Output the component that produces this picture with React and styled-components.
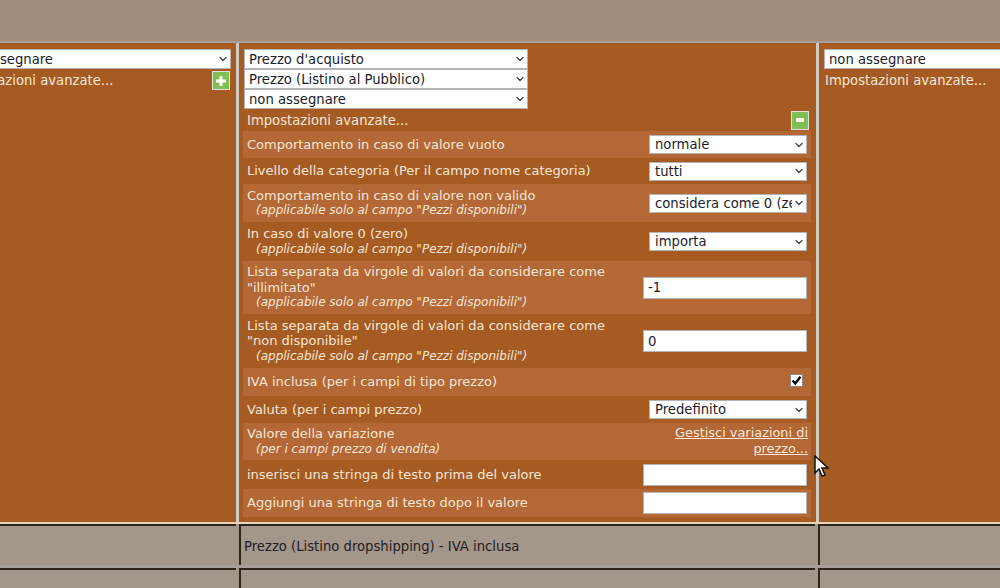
import styled, { createGlobalStyle } from "styled-components"
import { ChevronDown } from "lucide-react"

const GlobalStyle = createGlobalStyle`
  html, body {
    margin: 0;
    height: 100%;
    overflow: hidden;
    background: #a79f98;
  }
  * { box-sizing: border-box; }
`

const Page = styled.div`
  position: relative;
  width: 1000px;
  height: 588px;
  overflow: hidden;
  font-family: "DejaVu Sans", Verdana, sans-serif;
  font-size: 13px;
  color: #f6e6d8;
`

const TopBand = styled.div`
  height: 41px;
  background: #a28c7b;
`

const MainRow = styled.div`
  display: grid;
  grid-template-columns: 236px 577px 1fr;
  column-gap: 3px;
  margin-top: 2px;
  height: 479px;
  background: #cfcac5;
`

const Column = styled.div`
  background: #a65b22;
  padding: 6px ${(p) => p.$right || 0}px 0 ${(p) => p.$left || 0}px;
  min-width: 0;
  overflow: hidden;
`

const SideColumn = styled(Column)`
  display: flex;
  flex-direction: column;
  align-items: ${(p) => (p.$end ? "flex-end" : "flex-start")};
`

const SelectWrap = styled.div`
  position: relative;
  flex: none;
  width: ${(p) => p.$w}px;
  height: ${(p) => p.$h || 20}px;
`

const NativeSelect = styled.select`
  appearance: none;
  display: block;
  width: 100%;
  height: 100%;
  margin: 0;
  padding: 0 14px 0 ${(p) => p.$pad || 4}px;
  border: 1px solid #b4b4b8;
  border-radius: 0;
  background: #fff;
  color: #1c1c28;
  font: 13.2px "DejaVu Sans", Verdana, sans-serif;
`

const Arrow = styled.span`
  position: absolute;
  right: 2px;
  top: 50%;
  transform: translateY(-50%);
  display: flex;
  color: #444;
  pointer-events: none;
`

const Dropdown = ({ value, w, h, pad }) => (
  <SelectWrap $w={w} $h={h}>
    <NativeSelect $pad={pad} defaultValue={value}>
      <option>{value}</option>
    </NativeSelect>
    <Arrow>
      <ChevronDown size={12} strokeWidth={2.6} />
    </Arrow>
  </SelectWrap>
)

const AdvancedHead = styled.div`
  display: flex;
  flex: none;
  align-items: center;
  justify-content: space-between;
  width: ${(p) => p.$w};
  height: ${(p) => p.$h}px;
  padding: ${(p) => p.$pad};
  font-size: 13.2px;
  white-space: nowrap;
`

const ToggleButton = styled.span`
  flex: none;
  display: flex;
  align-items: center;
  justify-content: center;
  width: 18px;
  height: 19px;
  background: #7fbf56;
  border: 1px solid #e3e3d8;
`

const MiddleStack = styled.div`
  display: flex;
  flex-direction: column;
  padding-left: 1px;
`

const Settings = styled.div`
  display: flex;
  flex-direction: column;
  width: 568px;
`

const Row = styled.div`
  display: grid;
  grid-template-columns: 1fr 165px;
  align-items: center;
  height: ${(p) => p.$h}px;
  padding: 0 4px;
  background: ${(p) => (p.$light ? "#b36835" : "transparent")};
  line-height: 15.5px;
`

const RowLabel = styled.div`
  min-width: 0;
  padding-right: 10px;
`

const Hint = styled.div`
  margin-left: 9px;
  font-size: 12px;
  font-style: italic;
`

const RowControl = styled.div`
  display: flex;
  justify-content: flex-end;
`

const TextInput = styled.input`
  display: block;
  width: 164px;
  height: 22px;
  margin: 0;
  padding: 0 4px;
  border: 1px solid #b4b4b8;
  background: #fff;
  color: #1c1c28;
  font: 13.2px "DejaVu Sans", Verdana, sans-serif;
`

const CheckBox = styled.span`
  display: flex;
  align-items: center;
  justify-content: center;
  width: 13px;
  height: 13px;
  margin: 0 4px 3px 0;
  background: #fff;
  border: 1px solid #8a8a8a;
`

const ManageLink = styled.a`
  display: block;
  margin-right: -1px;
  color: #f9e9dc;
  font-size: 12.9px;
  text-align: right;
  text-decoration: underline;
  line-height: 16px;
  padding-bottom: 1px;
`

const BottomRule = styled.div`
  height: 2px;
  background: #e9d3bf;
`

const GrayRow = styled.div`
  display: grid;
  grid-template-columns: 236px 576px 1fr;
  column-gap: 3px;
  height: ${(p) => p.$h}px;
  margin-top: ${(p) => p.$gap || 0}px;
  background: #a3968b;
`

const GrayCell = styled.div`
  display: flex;
  align-items: center;
  padding: 2px 0 0 3px;
  font-size: 13.2px;
  color: #23201d;
  border-top: 2px solid #2d241c;
  border-left: ${(p) => (p.$noLine ? "0" : "2px solid #2d241c")};
`

const Pointer = styled.svg`
  position: absolute;
  left: 814px;
  top: 455px;
`

const rows = [
  { h: 27, light: true, label: "Comportamento in caso di valore vuoto", select: "normale" },
  { h: 26, label: "Livello della categoria (Per il campo nome categoria)", select: "tutti" },
  { h: 38, light: true, label: "Comportamento in caso di valore non valido", hint: "Pezzi disponibili", select: "considera come 0 (zero)" },
  { h: 39, label: "In caso di valore 0 (zero)", hint: "Pezzi disponibili", select: "importa" },
  { h: 53, light: true, label: 'Lista separata da virgole di valori da considerare come "illimitato"', hint: "Pezzi disponibili", input: "-1" },
  { h: 54, label: 'Lista separata da virgole di valori da considerare come "non disponibile"', hint: "Pezzi disponibili", input: "0" },
]

const SettingRow = ({ h, light, label, hint, select, input }) => (
  <Row $h={h} $light={light}>
    <RowLabel>
      {label}
      {hint && <Hint>(applicabile solo al campo "{hint}")</Hint>}
    </RowLabel>
    <RowControl>
      {select && <Dropdown value={select} w={158} h={19} pad={5} />}
      {input && <TextInput defaultValue={input} />}
    </RowControl>
  </Row>
)

export default function App() {
  return (
    <Page>
      <GlobalStyle />
      <TopBand />
      <MainRow>
        <SideColumn $end $right={5}>
          <Dropdown value="non assegnare" w={281} pad={5} />
          <AdvancedHead $w="281px" $h={23} $pad="0 1px 0 2px">
            <span>Impostazioni avanzate...</span>
            <ToggleButton>
              <svg width="12" height="12" viewBox="0 0 12 12"><path d="M6 1v10M1 6h10" stroke="#fff" strokeWidth="3" /></svg>
            </ToggleButton>
          </AdvancedHead>
        </SideColumn>
        <Column $left={4}>
          <MiddleStack>
            <Dropdown value="Prezzo d'acquisto" w={284} />
            <Dropdown value="Prezzo (Listino al Pubblico)" w={284} />
            <Dropdown value="non assegnare" w={284} />
            <AdvancedHead $w="100%" $h={22} $pad="0 7px 0 3px">
              <span>Impostazioni avanzate...</span>
              <ToggleButton>
                <svg width="8" height="4" viewBox="0 0 8 4"><rect width="8" height="4" rx="1" fill="#fff" /></svg>
              </ToggleButton>
            </AdvancedHead>
          </MiddleStack>
          <Settings>
            {rows.map((r) => <SettingRow key={r.label} {...r} />)}
            <Row $h={28} $light>
              <RowLabel>IVA inclusa (per i campi di tipo prezzo)</RowLabel>
              <RowControl>
                <CheckBox>
                  <svg width="11" height="11" viewBox="0 0 11 11"><path d="M1.5 5.5 4.2 8.5 9.5 1.8" fill="none" stroke="#000" strokeWidth="2.2" /></svg>
                </CheckBox>
              </RowControl>
            </Row>
            <Row $h={27}>
              <RowLabel>Valuta (per i campi prezzo)</RowLabel>
              <RowControl><Dropdown value="Predefinito" w={158} h={19} pad={5} /></RowControl>
            </Row>
            <Row $h={37} $light>
              <RowLabel>
                Valore della variazione
                <Hint>(per i campi prezzo di vendita)</Hint>
              </RowLabel>
              <ManageLink>Gestisci variazioni di prezzo...</ManageLink>
            </Row>
            <Row $h={29}>
              <RowLabel>inserisci una stringa di testo prima del valore</RowLabel>
              <RowControl><TextInput /></RowControl>
            </Row>
            <Row $h={28} $light>
              <RowLabel>Aggiungi una stringa di testo dopo il valore</RowLabel>
              <RowControl><TextInput /></RowControl>
            </Row>
          </Settings>
        </Column>
        <SideColumn $left={5}>
          <Dropdown value="non assegnare" w={282} />
          <AdvancedHead $w="282px" $h={23} $pad="0 0 0 1px">
            <span>Impostazioni avanzate...</span>
          </AdvancedHead>
        </SideColumn>
      </MainRow>
      <BottomRule />
      <GrayRow $h={41}>
        <GrayCell $noLine />
        <GrayCell>Prezzo (Listino dropshipping) - IVA inclusa</GrayCell>
        <GrayCell />
      </GrayRow>
      <GrayRow $h={20} $gap={3}>
        <GrayCell $noLine />
        <GrayCell />
        <GrayCell />
      </GrayRow>
      <Pointer width="16" height="23" viewBox="0 0 16 23">
        <path d="M1 1v17l4-4 3 7 3-1-3-7h6z" fill="#fff" stroke="#111" strokeWidth="1.5" />
      </Pointer>
    </Page>
  )
}
